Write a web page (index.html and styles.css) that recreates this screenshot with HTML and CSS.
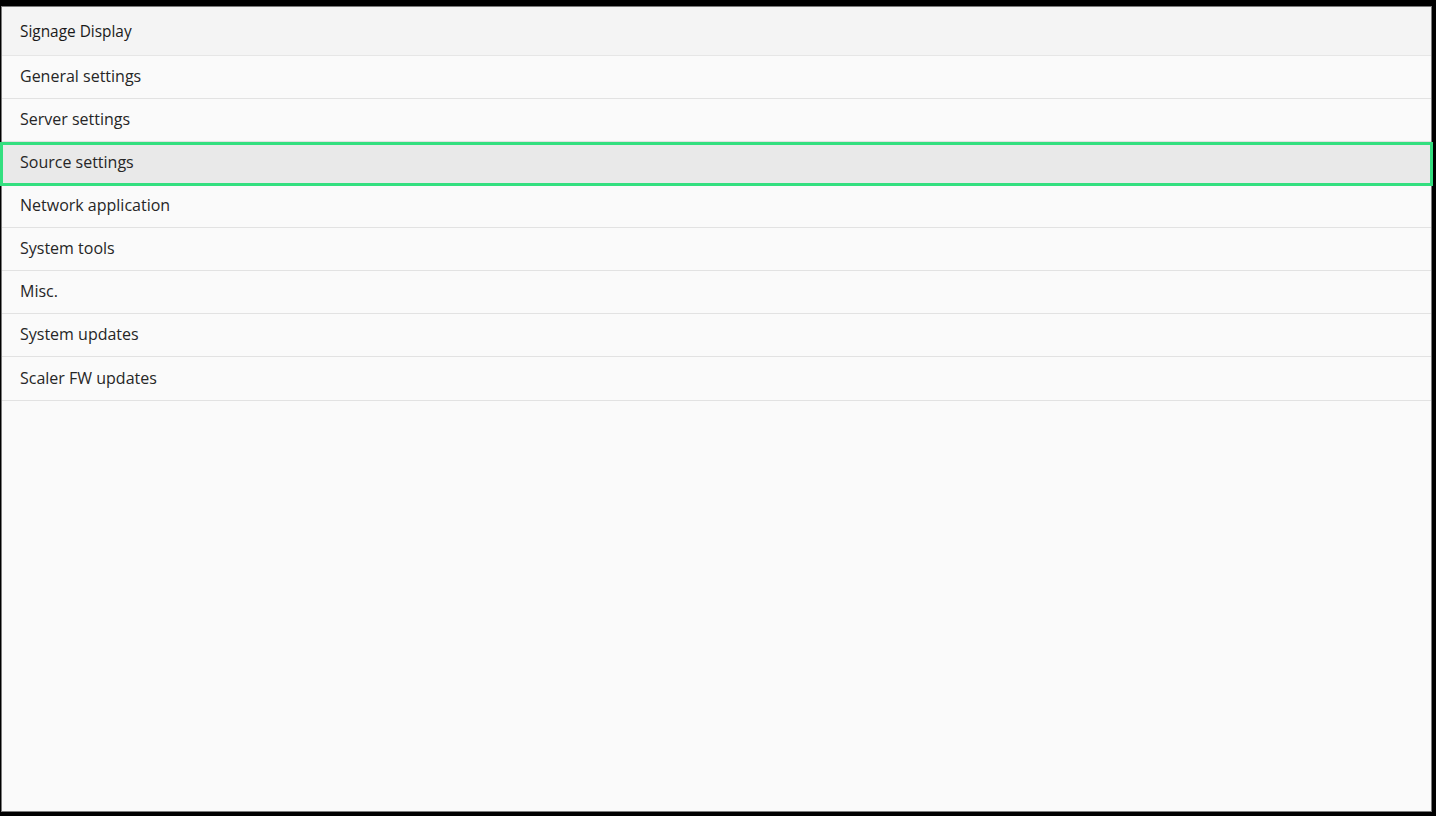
FILE: index.html
```html
<!DOCTYPE html>
<html>
<head>
<meta charset="utf-8">
<title>Signage Display</title>
<link rel="stylesheet" href="styles.css">
</head>
<body>
<div class="frame">
  <div class="header">Signage Display</div>
  <ul class="menu">
    <li class="item">General settings</li>
    <li class="item">Server settings</li>
    <li class="item selected">Source settings</li>
    <li class="item">Network application</li>
    <li class="item">System tools</li>
    <li class="item">Misc.</li>
    <li class="item">System updates</li>
    <li class="item last">Scaler FW updates</li>
  </ul>
</div>
</body>
</html>
```
FILE: styles.css
```css
html, body {
  margin: 0;
  padding: 0;
  background: #000;
  height: 100%;
}
body {
  font-family: "Open Sans", "Noto Sans", sans-serif;
  color: #222;
  overflow: hidden;
}
.frame {
  box-sizing: border-box;
  margin: 6px 0 0 1px;
  width: 1431px;
  height: 806px;
  border: 1px solid #7a7a7a;
  background: #fafafa;
}
.header {
  box-sizing: border-box;
  height: 49px;
  border-bottom: 1px solid #e6e6e6;
  background: #f4f4f4;
  padding: 1px 0 0 18px;
  display: flex;
  align-items: center;
  font-size: 15.4px;
  color: #1a1a1a;
}
.menu {
  list-style: none;
  margin: 0;
  padding: 0;
}
.item {
  box-sizing: border-box;
  position: relative;
  height: 43px;
  border-bottom: 1px solid #e2e2e2;
  padding: 0 0 2px 18px;
  display: flex;
  align-items: center;
  font-size: 16px;
  color: #262626;
}
.item.last {
  height: 44px;
}
.item.selected {
  background: #e9e9e9;
}
.item.selected::after {
  content: "";
  position: absolute;
  top: 0;
  bottom: -2px;
  left: -2px;
  right: -2px;
  border: 3px solid #33df7f;
  pointer-events: none;
}
```
